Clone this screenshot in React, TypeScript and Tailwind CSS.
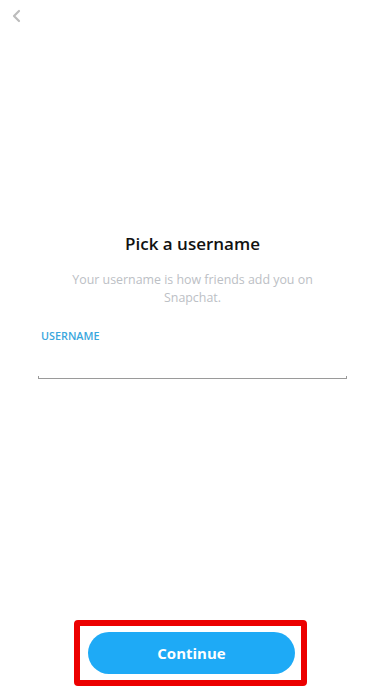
import React from "react";

export default function App() {
  return (
    <div
      className="w-[385px] h-[688px] bg-white flex flex-col relative overflow-hidden"
      style={{ fontFamily: '"Open Sans", "Lato", sans-serif' }}
    >
      <div className="h-[33px] pl-[11px] pt-[9px]">
        <svg width="12" height="14" viewBox="0 0 12 14" fill="none">
          <path d="M8 2 L3 7 L8 12" stroke="#bcbcbc" strokeWidth="2.2" strokeLinecap="round" strokeLinejoin="round" />
        </svg>
      </div>
      <div className="mt-[199px] flex flex-col items-center">
        <h1 className="text-[17px] leading-[24px] font-semibold text-[#111]">Pick a username</h1>
        <p className="mt-[15px] w-[270px] text-center text-[12.4px] leading-[18px] font-medium text-[#bcc0c5]">
          Your username is how friends add you on Snapchat.
        </p>
      </div>
      <div className="mt-[22px] px-[38px]">
        <div className="pl-[3px] text-[10.8px] leading-[14px] font-semibold text-[#3aa7dd]">USERNAME</div>
        <div className="mt-[33px] h-[3px] border-b border-l border-r border-[#9a9a9a]" />
      </div>
      <div className="mt-auto flex justify-center pb-[2px]">
        <div className="ml-[-4px] w-[233px] h-[66px] border-[6px] border-[#ec0000] rounded-[4px] pl-[8px] pr-[6px] py-[6px]">
          <button className="w-full h-full rounded-full bg-[#1eaaf6] text-white text-[15px] font-bold">
            Continue
          </button>
        </div>
      </div>
    </div>
  );
}
